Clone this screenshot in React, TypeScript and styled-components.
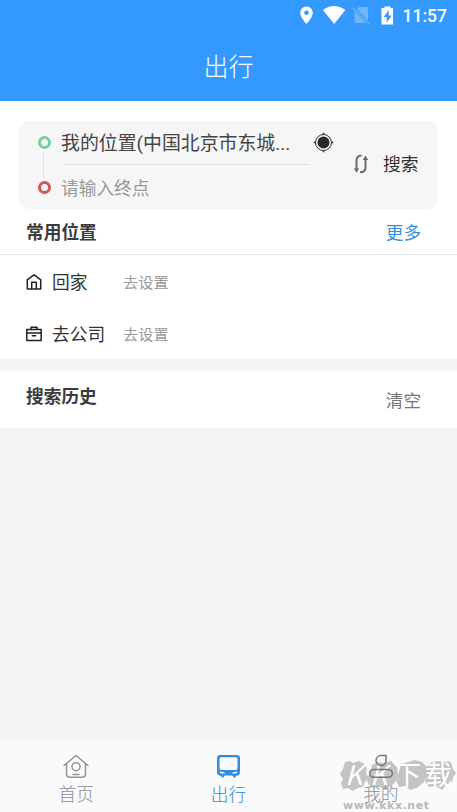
import React from 'react';
import styled, { createGlobalStyle } from 'styled-components';

const GlobalStyle = createGlobalStyle`
  * { box-sizing: border-box; }
  body { margin: 0; background: #f5f5f5; font-family: Roboto, "Noto Sans CJK SC", sans-serif; }
  svg { display: block; flex: none; }
`;

const Screen = styled.div`
  width: 457px;
  height: 812px;
  display: flex;
  flex-direction: column;
  overflow: hidden;
  background: #f5f5f5;
`;

const Header = styled.header`
  height: 101px;
  background: #3399ff;
  color: #fff;
`;

const StatusBar = styled.div`
  height: 32px;
  display: flex;
  align-items: center;
  justify-content: flex-end;
  padding-right: 10px;
`;

const Clock = styled.span`
  font: 500 17.500px/32px Roboto, sans-serif;
  margin-left: 8px;
`;

const Title = styled.h1`
  margin: 0;
  height: 69px;
  font-size: 25px;
  font-weight: 300;
  line-height: 71px;
  text-align: center;
`;

const Planner = styled.section`
  background: #fff;
  padding: 20px 19px 0;
`;

const SearchCard = styled.div`
  height: 88px;
  display: flex;
  border-radius: 10px;
  background: #f6f6f6;
`;

const RouteMarks = styled.div`
  width: 42px;
  padding: 15px 0 0 19px;
  display: flex;
  flex-direction: column;
`;

const Ring = styled.i<{ $color: string }>`
  width: 13px;
  height: 13px;
  border-radius: 50%;
  border: 3px solid ${p => p.$color};
`;

const Connector = styled.i`
  width: 1px;
  height: 26px;
  margin: 3px 0 3px 5px;
  background: #e2e2e2;
`;

const Fields = styled.div`
  width: 274px;
`;

const Field = styled.div<{ $empty?: boolean }>`
  height: ${p => (p.$empty ? 44 : 43)}px;
  display: flex;
  justify-content: space-between;
  color: ${p => (p.$empty ? '#999' : '#444')};
  font-size: ${p => (p.$empty ? 17.7 : 18.9)}px;
  line-height: ${p => (p.$empty ? 48 : 46)}px;
  white-space: nowrap;
`;

const FieldRule = styled.div`
  height: 1px;
  margin-left: 2px;
  margin-right: 27px;
  background: #dedede;
`;

const LocateButton = styled.button`
  border: 0;
  padding: 11px 1px 0 0;
  background: none;
  height: 32px;
`;

const CardAction = styled.button<{ $left: number }>`
  border: 0;
  padding: 0;
  margin-left: ${p => p.$left}px;
  background: none;
  font: 400 17.8px/90px Roboto, "Noto Sans CJK SC", sans-serif;
  color: #333;
  display: flex;
  align-items: center;
`;

const SwapButton = styled(CardAction)`
  padding-bottom: 3px;
`;

const SectionHead = styled.div<{ $height: number }>`
  height: ${p => p.$height}px;
  padding: 0 36px 0 26px;
  display: flex;
  justify-content: space-between;
  background: #fff;
`;

const SectionTitle = styled.h2<{ $line: number }>`
  margin: 0;
  font-size: 17.7px;
  font-weight: 700;
  line-height: ${p => p.$line}px;
  color: #3c3c3c;
`;

const SectionLink = styled.span<{ $color: string; $line: number }>`
  font-size: 17.6px;
  line-height: ${p => p.$line}px;
  color: ${p => p.$color};
`;

const Places = styled.div`
  height: 105px;
  background: #fff;
  border-top: 1px solid #e6e6e6;
`;

const PlaceRow = styled.div`
  height: 52px;
  padding: 2px 0 0 26px;
  display: flex;
  align-items: center;
`;

const PlaceName = styled.span`
  width: 71px;
  margin-left: 10px;
  padding-top: 2px;
  font-size: 17.7px;
  line-height: 26px;
  color: #333;
`;

const PlaceHint = styled.span`
  font-size: 15.2px;
  line-height: 24px;
  padding-top: 2px;
  color: #999;
`;

const HistoryBlock = styled.section`
  margin-top: 12px;
`;

const TabBar = styled.nav`
  position: relative;
  z-index: 0;
  height: 71px;
  margin-top: auto;
  display: grid;
  grid-template-columns: repeat(3, 1fr);
  background: #fafafa;
`;

const Tab = styled.div<{ $active?: boolean }>`
  display: flex;
  flex-direction: column;
  align-items: center;
  padding-top: 13px;
  color: ${p => (p.$active ? '#2f8bdc' : '#868e9b')};
  font-size: 17.7px;
  line-height: 26px;
  font-weight: 300;
  gap: 3px;
`;

const Watermark = styled.div`
  position: absolute;
  z-index: -1;
  right: 0;
  top: 17px;
  width: 118px;
  height: 54px;
  pointer-events: none;
`;

const Brand = styled.div`
  position: absolute;
  left: 6px;
  top: 0;
  display: flex;
  color: #fff;
  font: 400 27px/31px "Noto Sans CJK SC", sans-serif;
`;

const BrandChar = styled.span<{ $width: number; $slant?: boolean }>`
  width: ${p => p.$width}px;
  font-style: ${p => (p.$slant ? 'italic' : 'normal')};
`;

const Site = styled.div`
  position: absolute;
  left: 4px;
  top: 40px;
  color: #b8b8b8;
  font: 700 11px/15px "DejaVu Sans", sans-serif;
  letter-spacing: 0.55px;
  white-space: nowrap;
`;

const StatusIcons = () => (
  <svg width="95" height="22" viewBox="299 5 95 22">
    <path fill="#fff" fillRule="evenodd" d="M305.500 6.500a6.300 6.300 0 0 0-6.300 6.300c0 4.700 6.300 11.200 6.300 11.200s6.300-6.500 6.300-11.200a6.300 6.300 0 0 0-6.300-6.300Zm0 4a2.300 2.300 0 1 1 0 4.600 2.300 2.300 0 0 1 0-4.600Z" />
    <path fill="#fff" d="M322 10Q333 2 344.300 10L333.200 24Z" />
    <path fill="#73b5fa" d="M358.500 7H367v13.500L355.500 9ZM353.500 11.500 365 23h-11.500Z" />
    <path stroke="#73b5fa" strokeWidth="1.500" d="m352 8 16 16" />
    <path fill="#fff" fillRule="evenodd" d="M383.500 6.500h6v1.500h2.500v16.500h-11.500V8h3Zm4.200 3.500-5 7h3v5.500l5-7h-3Z" />
  </svg>
);

const LocateIcon = () => (
  <svg width="21" height="21" viewBox="0 0 21 21" fill="none" stroke="#333">
    <circle cx="10.500" cy="10.500" r="8" strokeWidth="1" />
    <circle cx="10.500" cy="10.500" r="6" fill="#292929" stroke="none" />
    <path strokeWidth="1.500" d="M10.500 .7v2.300M10.500 18v2.300M.7 10.500h2.300M18 10.500h2.300" />
  </svg>
);

const SwapIcon = () => (
  <svg width="16" height="20" viewBox="0 0 16 20" fill="none" stroke="#6a6a6a" strokeWidth="2">
    <path d="M8.500 1.500C5 1.500 3.500 3 3.500 6.500V16M7 18.300c3.800 0 5.500-1.500 5.500-4.800V4" />
    <path fill="#6a6a6a" stroke="none" d="M.8 14.500h5.400L3.500 18.700ZM9.800 6h5.400L12.500 1.500Z" />
  </svg>
);

const HomeIcon = () => (
  <svg width="16" height="16" viewBox="0 0 16 16" fill="none" stroke="#222" strokeWidth="1.500" strokeLinejoin="round">
    <path d="M.8 6.200 8 .8l7.200 5.400M1.300 6v9h13.400V6M5.700 15V8.200h4.600V15" />
  </svg>
);

const WorkIcon = () => (
  <svg width="16" height="16" viewBox="0 0 16 16" fill="none" stroke="#222" strokeWidth="1.500" strokeLinejoin="round">
    <path d="M.8 3.500h14.400V14.500H.8ZM5 3.500V1.200h6v2.300M1 7h14M5.700 9.800h4.600" />
  </svg>
);

const HouseTabIcon = () => (
  <svg width="26" height="25" viewBox="0 0 26 25" fill="none" stroke="#959595" strokeWidth="1.500" strokeLinecap="round" strokeLinejoin="round">
    <path d="M1 11.500 13 1.500l12 10M3.500 9.800v10q0 3.500 3.500 3.500h12q3.500 0 3.500-3.500v-10M10 20.500h6" />
    <circle cx="13" cy="12.700" r="4" />
  </svg>
);

const BusTabIcon = () => (
  <svg width="25" height="25" viewBox="0 0 25 25">
    <path fill="#318ce4" fillRule="evenodd" d="M4 1h17q3 0 3 3v14.500q0 2-2 3h-1.500L18.500 24 16 21.500H9L6.500 24 4.500 21.500H3q-2-1-2-3V4q0-3 3-3Zm1 2.300Q3.500 3.300 3.500 5v9q0 2 2 2h14q2 0 2-2V5q0-1.700-1.500-1.700ZM3.500 17.600l.8 1.600 4.700.5-1-1.500ZM21.500 17.600l-4.500.6-1 1.500 4.700-.5Z" />
  </svg>
);

const MineTabIcon = () => (
  <svg width="26" height="25" viewBox="0 0 26 25" fill="none" stroke="#777" strokeWidth="1.500">
    <path d="M13 1.500h5v5.500a5 5 0 1 1-5-5.500Z" />
    <rect x="1.800" y="15.500" width="22.500" height="7.800" rx="3.800" />
  </svg>
);

const InkBlots = () => (
  <svg width="118" height="34" viewBox="0 0 118 34" fill="#c4c4c4">
    <path d="m6 4 5-1 3 2 6-2 5 3 3 4-1 5 3 5-4 4-2 5-5 1-5 3-5-3-5 1-2-6 2-4-3-5 3-5Z" />
    <path d="m33 7 6-3 5 1 8-2 6 6 1 7-2 7-5 5-5 4-6-3-7 1-5-4-1-6 3-5Z" />
    <path d="m62 6 7-2 7-2 7 2 5 5v7l-3 8-7 6-7 2-5-4-6 1-3-7 3-8Z" />
    <path d="m93 4 6-1 6 1 6-1 2 4 1 4 3 4-3 4-1 5-6 3-4 5-6-4-7 1-4-5 1-6-3-6 4-4Z" />
  </svg>
);

const Place = ({ icon, name }: { icon: React.ReactNode; name: string }) => (
  <PlaceRow>{icon}<PlaceName>{name}</PlaceName><PlaceHint>去设置</PlaceHint></PlaceRow>
);

export default function App() {
  return (
    <>
      <GlobalStyle />
      <Screen>
        <Header>
          <StatusBar><StatusIcons /><Clock>11:57</Clock></StatusBar>
          <Title>出行</Title>
        </Header>
        <Planner>
          <SearchCard>
            <RouteMarks><Ring $color="#75ce9b" /><Connector /><Ring $color="#d75358" /></RouteMarks>
            <Fields>
              <Field><span>我的位置(中国北京市东城...</span><LocateButton><LocateIcon /></LocateButton></Field>
              <FieldRule />
              <Field $empty>请输入终点</Field>
            </Fields>
            <SwapButton $left={18}><SwapIcon /></SwapButton>
            <CardAction $left={14}>搜索</CardAction>
          </SearchCard>
        </Planner>
        <SectionHead $height={45}>
          <SectionTitle $line={48}>常用位置</SectionTitle>
          <SectionLink $line={48} $color="#318fe0">更多</SectionLink>
        </SectionHead>
        <Places>
          <Place icon={<HomeIcon />} name="回家" />
          <Place icon={<WorkIcon />} name="去公司" />
        </Places>
        <HistoryBlock>
          <SectionHead $height={57}>
            <SectionTitle $line={53}>搜索历史</SectionTitle>
            <SectionLink $line={60} $color="#777">清空</SectionLink>
          </SectionHead>
        </HistoryBlock>
        <TabBar>
          <Tab><HouseTabIcon />首页</Tab>
          <Tab $active><BusTabIcon />出行</Tab>
          <Tab><MineTabIcon />我的</Tab>
          <Watermark>
            <InkBlots />
            <Brand>
              <BrandChar $width={25} $slant>K</BrandChar>
              <BrandChar $width={24} $slant>K</BrandChar>
              <BrandChar $width={31}>下</BrandChar>
              <BrandChar $width={28}>载</BrandChar>
            </Brand>
            <Site>www.kkx.net</Site>
          </Watermark>
        </TabBar>
      </Screen>
    </>
  );
}
